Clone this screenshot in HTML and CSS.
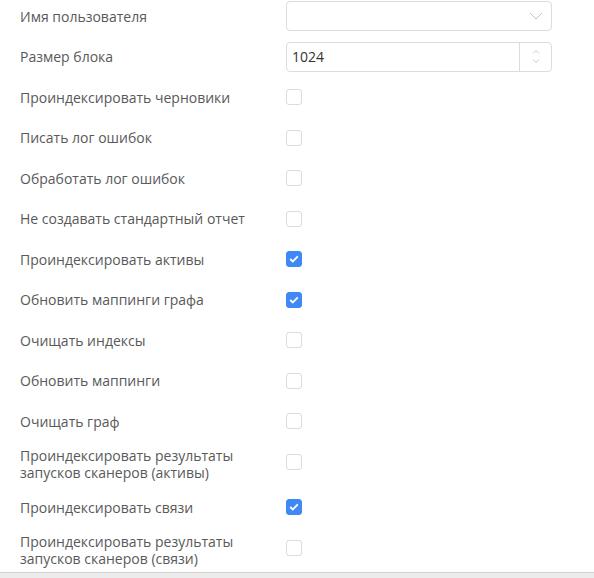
FILE: index.html
```html
<!DOCTYPE html>
<html lang="ru">
<head>
<meta charset="utf-8">
<link rel="stylesheet" href="styles.css">
</head>
<body>
<div class="page">
  <form class="form">
    <div class="row">
      <label class="label">Имя пользователя</label>
      <div class="select">
        <svg class="chev" width="14" height="8" viewBox="0 0 14 8"><path d="M1 1 L7 7 L13 1" fill="none" stroke="#c4c4c4" stroke-width="1"/></svg>
      </div>
    </div>
    <div class="row">
      <label class="label">Размер блока</label>
      <div class="number">
        <span class="num-value">1024</span>
        <span class="spin">
          <svg width="8" height="5" viewBox="0 0 8 5"><path d="M1 4.5 L4 1.5 L7 4.5" fill="none" stroke="#c8c8c8" stroke-width="1"/></svg>
          <svg width="8" height="5" viewBox="0 0 8 5"><path d="M1 0.5 L4 3.5 L7 0.5" fill="none" stroke="#c8c8c8" stroke-width="1"/></svg>
        </span>
      </div>
    </div>
    <div class="row"><label class="label">Проиндексировать черновики</label><span class="cb"></span></div>
    <div class="row"><label class="label">Писать лог ошибок</label><span class="cb"></span></div>
    <div class="row"><label class="label">Обработать лог ошибок</label><span class="cb"></span></div>
    <div class="row"><label class="label">Не создавать стандартный отчет</label><span class="cb"></span></div>
    <div class="row"><label class="label">Проиндексировать активы</label><span class="cb on"><svg width="10" height="8" viewBox="0 0 10 8"><path d="M1.2 4 L3.8 6.4 L8.8 1.4" fill="none" stroke="#fff" stroke-width="1.8"/></svg></span></div>
    <div class="row"><label class="label">Обновить маппинги графа</label><span class="cb on"><svg width="10" height="8" viewBox="0 0 10 8"><path d="M1.2 4 L3.8 6.4 L8.8 1.4" fill="none" stroke="#fff" stroke-width="1.8"/></svg></span></div>
    <div class="row"><label class="label">Очищать индексы</label><span class="cb"></span></div>
    <div class="row"><label class="label">Обновить маппинги</label><span class="cb"></span></div>
    <div class="row"><label class="label">Очищать граф</label><span class="cb"></span></div>
    <div class="row tall"><label class="label">Проиндексировать результаты запусков сканеров (активы)</label><span class="cb"></span></div>
    <div class="row"><label class="label">Проиндексировать связи</label><span class="cb on"><svg width="10" height="8" viewBox="0 0 10 8"><path d="M1.2 4 L3.8 6.4 L8.8 1.4" fill="none" stroke="#fff" stroke-width="1.8"/></svg></span></div>
    <div class="row tall"><label class="label">Проиндексировать результаты запусков сканеров (связи)</label><span class="cb"></span></div>
  </form>
  <div class="bottom-bar"></div>
</div>
</body>
</html>
```

FILE: styles.css
```css
html, body {
  margin: 0;
  padding: 0;
  background: #ffffff;
}
.page {
  height: 578px;
  display: flex;
  flex-direction: column;
  font-family: "Open Sans", "Liberation Sans", sans-serif;
  font-size: 14px;
  color: #595959;
}
.form {
  flex: 1;
  padding: 1px 0 0 20px;
  display: flex;
  flex-direction: column;
  gap: 10.5px;
}
.row {
  display: grid;
  grid-template-columns: 266px 266px;
  align-items: center;
  min-height: 30px;
}
.row.tall {
  min-height: 35px;
}
.label {
  line-height: 17px;
  padding-right: 16px;
}
.select, .number {
  box-sizing: border-box;
  height: 30px;
  border: 1px solid #dcdcdc;
  border-radius: 4px;
  background: #fff;
  display: flex;
  align-items: center;
}
.select {
  justify-content: flex-end;
  padding-right: 8px;
}
.chev {
  display: block;
}
.number {
  justify-content: space-between;
}
.num-value {
  padding-left: 5px;
  color: #333333;
}
.spin {
  align-self: stretch;
  width: 31px;
  border-left: 1px solid #dcdcdc;
  display: flex;
  flex-direction: column;
  align-items: center;
  justify-content: center;
  gap: 5px;
}
.spin svg {
  display: block;
}
.cb {
  box-sizing: border-box;
  width: 16px;
  height: 16px;
  border: 1px solid #dcdcdc;
  border-radius: 3px;
  background: #fff;
  display: flex;
  align-items: center;
  justify-content: center;
}
.row.tall .cb {
  margin-bottom: 4px;
}
.cb.on {
  background: #3f88f6;
  border-color: #3f88f6;
}
.cb svg {
  display: block;
}
.bottom-bar {
  height: 5px;
  border-top: 1px solid #d2d2d2;
  background: #ececec;
}
```
